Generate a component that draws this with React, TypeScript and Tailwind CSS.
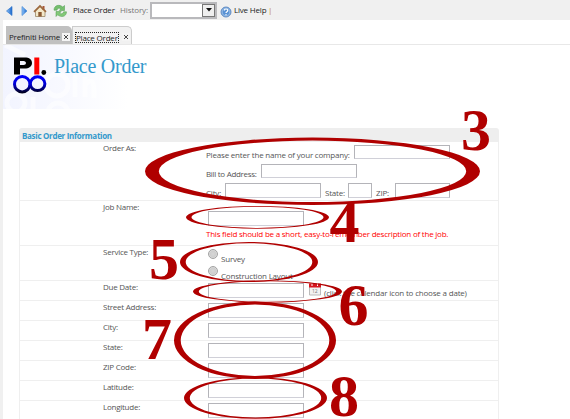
import type { ReactNode } from 'react';

const Field = ({ className }: { className: string }) => (
  <div className={`shrink-0 border border-[#b4b4b9] border-b-[#d0d0d8] bg-white ${className}`} />
);

const Row = ({ label, height, children }: { label: string; height: string; children?: ReactNode }) => (
  <div className={`flex shrink-0 border-b border-[#efefef] ${height}`}>
    <div className="w-[83px] shrink-0" />
    <div className="w-[103px] shrink-0 leading-[11px] tracking-[-0.25px]">{label}</div>
    <div className="min-w-0 flex-1">{children}</div>
  </div>
);

const InputRow = ({ label }: { label: string }) => (
  <Row label={label} height="h-5">
    <Field className="ml-0.5 mt-0.5 h-[15px] w-24" />
  </Row>
);

const Radio = () => (
  <div className="h-[10px] w-[10px] shrink-0 rounded-full border border-[#a2a2a2] bg-radial from-[#d5d5d5] from-10% via-[#cecece] to-[#f7f7f7]" />
);

const Close = () => (
  <span className="flex h-[8px] w-[8px] shrink-0 items-center justify-center bg-[#f4f4f4]">
    <svg width="6" height="6" viewBox="0 0 6 6"><path d="M1 1l4 4M5 1L1 5" stroke="#333" strokeWidth=".9" /></svg>
  </span>
);

const rings = [
  [312.5, 171.3, 167.5, 33.7, 153.7, 30.7],
  [257.5, 217.3, 71.5, 11.4, 66, 10.6],
  [249, 262, 69, 20, 63.3, 18.8],
  [267.5, 291.5, 74.5, 11, 68.7, 10.2],
  [255, 340.3, 81, 38.7, 74.3, 35.7],
  [255.5, 398, 71.5, 20.8, 65.7, 19.5],
];

const ellipse = (x: number, y: number, rx: number, ry: number) =>
  `M${x - rx} ${y}a${rx} ${ry} 0 1 0 ${rx * 2} 0a${rx} ${ry} 0 1 0 ${-rx * 2} 0Z`;

const numbers: [string, number, number][] = [
  ['3', 461, 149.5], ['4', 329.5, 242], ['5', 149, 279.3],
  ['6', 338.5, 325.2], ['7', 142, 359], ['8', 329, 416.3],
];

const Annotations = () => (
  <svg className="pointer-events-none absolute left-0 top-0" width="570" height="419" fill="#b00000">
    {rings.map(([x, y, a, b, c, d]) => (
      <path key={y} fillRule="evenodd" d={ellipse(x, y, a, b) + ellipse(x, y, c, d)} />
    ))}
    {numbers.map(([n, x, y]) => (
      <text key={n} x={x} y={y} fontSize="60" fontWeight="700" letterSpacing="0" fontFamily="'Liberation Serif', serif">{n}</text>
    ))}
  </svg>
);

const Toolbar = () => (
  <header className="flex h-5 shrink-0 items-center whitespace-nowrap bg-[#f0f0f0] text-[#222]">
    <svg className="shrink-0" width="72" height="20" viewBox="0 0 72 20">
      <defs>
        <linearGradient id="arrow"><stop stopColor="#8fc4fa" /><stop offset="1" stopColor="#1764ca" /></linearGradient>
      </defs>
      <path d="M12 6.5v9L6.5 11Z" fill="url(#arrow)" stroke="#3479cc" strokeWidth=".7" />
      <path d="M22 6.5v9l5-4.5Z" fill="url(#arrow)" stroke="#4a8cd6" strokeWidth=".7" />
      <path d="M35.500 11v5.500h9.500V11L40 6.500Z" fill="#f3e8c9" stroke="#9a8867" strokeWidth=".8" />
      <path d="M42.500 6h2v4h-2z" fill="#a85739" />
      <path d="M34 11.800L40 6l6 5.800" fill="none" stroke="#9d693e" strokeWidth="1.700" />
      <path d="M38.300 12h3.400v4.500h-3.400z" fill="#8a5932" />
      <path d="M54 10.200C54 5 59.500 4 62.800 7l1.700-1.500v5h-5.200l1.600-1.700c-1.800-1.300-3.600-.6-4 1.400Z" fill="#76bf6e" stroke="#4b984b" strokeWidth=".5" />
      <path d="M66.500 11.800c0 5-5.500 6-8.800 3L56 16.500v-5h5.200l-1.600 1.700c1.800 1.300 3.600.6 4-1.400Z" fill="#83c978" stroke="#4b984b" strokeWidth=".5" />
    </svg>
    <span className="ml-[1px] w-[47px] shrink-0">Place Order</span>
    <span className="w-[30px] shrink-0 tracking-[-0.1px] text-[#777]">History:</span>
    <div className="flex h-[17px] w-[67px] shrink-0 border-2 border-[#b9b9bc] bg-white">
      <div className="flex-1" />
      <div className="flex w-[13px] items-center justify-center border border-[#777] bg-[#eee]">
        <svg width="6" height="4" viewBox="0 0 6 4"><path d="M0 0h6L3 3.500Z" fill="#111" /></svg>
      </div>
    </div>
    <svg className="ml-[3px] mt-[3px] shrink-0" width="12" height="12" viewBox="0 0 12 12">
      <circle cx="6" cy="6" r="5" fill="#5a92d4" stroke="#6a91c4" />
      <circle cx="6" cy="6" r="3.900" fill="none" stroke="#b7d3f0" strokeWidth=".6" />
      <path d="M4.300 4.500c0-2 3.500-2 3.500 0C7.800 5.800 6 5.600 6 7" fill="none" stroke="white" strokeWidth="1.200" />
      <circle cx="6" cy="8.800" r=".7" fill="white" />
    </svg>
    <span className="ml-[2px] w-[34px] shrink-0">Live Help</span>
    <span className="text-[#c0803a]">|</span>
  </header>
);

const Logo = () => (
  <svg className="relative ml-[9px] mt-[11px] shrink-0" width="36" height="40" viewBox="0 0 36 40">
    <defs>
      <linearGradient id="blue" x1="0" y1="19" x2="0" y2="37" gradientUnits="userSpaceOnUse">
        <stop stopColor="#0000ff" /><stop offset=".5" stopColor="#0000d8" /><stop offset="1" stopColor="#000018" />
      </linearGradient>
    </defs>
    <path fillRule="evenodd" d="M2 1.500h10.500c5 0 7.500 2 7.500 5.500s-3 5.500-7.500 5.500H8v6H2ZM8 5v4h3.500c3.300 0 3.300-4 0-4Z" fill="#000" />
    <path d="M22.300 1.500h5v17h-5z" fill="#f00" />
    <circle cx="31.800" cy="16.500" r="2.400" />
    <ellipse cx="10.200" cy="28.200" rx="7.700" ry="7.700" fill="none" stroke="url(#blue)" strokeWidth="3" />
    <ellipse cx="25.600" cy="27.700" rx="7.300" ry="6.900" fill="none" stroke="url(#blue)" strokeWidth="3" />
  </svg>
);

const Watermark = () => (
  <svg className="absolute left-0 top-0" width="125" height="64" viewBox="0 0 125 64">
    <defs>
      <linearGradient id="fade"><stop stopColor="#f2f4ff" /><stop offset=".5" stopColor="#f8f9ff" /><stop offset="1" stopColor="#fff" /></linearGradient>
    </defs>
    <path d="M0 0h125v64H0z" fill="url(#fade)" />
    <g fill="none" stroke="#fff" strokeOpacity=".55" strokeWidth="5">
      <circle cx="54" cy="40" r="11" />
      <path d="M72 30v22M82 32v20M82 40q8-9 9 3v10" />
      <circle cx="13" cy="58" r="9" />
      <circle cx="55" cy="68" r="10" />
      <path d="M30 64V52M2 0l20 10" />
    </g>
  </svg>
);

export default function App() {
  return (
    <main className="relative flex h-[419px] w-[570px] flex-col overflow-hidden border-l-[3px] border-[#f0f0f0] bg-white font-['Open_Sans','Noto_Sans',sans-serif] text-[8px] tracking-[-0.19px] text-[#555]">
      <div className="-ml-[3px]"><Toolbar /></div>
      <nav className="flex h-[25px] shrink-0 items-end whitespace-nowrap border-b border-[#e8e8e8] pl-[3px] text-[#222]">
        <div className="flex h-[18px] w-[66px] items-center rounded-tr-[5px] bg-[#c0c0c0] pl-[3px] pt-[3px]">
          <span className="w-[53px] shrink-0">Prefiniti Home</span><Close />
        </div>
        <div className="flex h-[18px] w-[60px] items-center rounded-tr-[5px] border border-b-0 border-[#ccc] bg-[#f1f1f1] pl-[2px] pt-[3px]">
          <span className="w-[44px] shrink-0 border border-dotted border-[#222] leading-[9px]">Place Order</span>
          <span className="ml-[3px]"><Close /></span>
        </div>
      </nav>
      <section className="relative flex h-16 shrink-0">
        <Watermark />
        <Logo />
        <h1 className="relative ml-[6px] mt-[9px] whitespace-nowrap font-['Liberation_Serif',serif] text-[20px] leading-6 tracking-[-0.25px] text-[#3399cc]">Place Order</h1>
      </section>
      <section className="ml-4 mt-[19px] flex w-[480px] flex-1 flex-col">
        <h2 className="h-[14px] shrink-0 rounded-t-[3px] bg-[#eeeeee] pl-[3px] text-[8px] font-bold leading-[15px] tracking-[-0.3px] text-[#3399cc]">Basic Order Information</h2>
        <div className="flex min-h-0 flex-1 flex-col whitespace-nowrap border-x border-[#efefef]">
          <Row label="Order As:" height="h-[59px]">
            <div className="mt-[3px] flex h-[19px] items-start">
              <span className="w-[148px] shrink-0 pt-1 leading-[12px]">Please enter the name of your company:</span><Field className="h-[14px] w-24" />
            </div>
            <div className="flex h-[19px] items-start">
              <span className="w-[55px] shrink-0 pt-1 leading-[12px] tracking-[-0.3px]">Bill to Address:</span><Field className="h-[14px] w-24" />
            </div>
            <div className="flex h-[17px] items-start">
              <span className="w-[19px] shrink-0 pt-1 leading-[12px]">City:</span><Field className="h-[15px] w-24" />
              <span className="ml-1 w-[23px] shrink-0 pt-1 leading-[12px]">State:</span><Field className="h-[15px] w-6" />
              <span className="ml-1 w-[19px] shrink-0 pt-1 leading-[12px]">ZIP:</span><Field className="h-[15px] w-[55px]" />
            </div>
          </Row>
          <Row label="Job Name:" height="h-[45px]">
            <Field className="ml-0.5 mt-[10px] h-[15px] w-24" />
            <div className="mt-[2px] leading-[11px] tracking-[-0.22px] text-[#ff0000]">This field should be a short, easy-to-remember description of the job.</div>
          </Row>
          <Row label="Service Type:" height="h-[35px]">
            <div className="ml-0.5 mt-[3px] flex h-[17px]"><Radio /><span className="ml-[3px] pt-[4px] leading-[11px]">Survey</span></div>
            <div className="ml-0.5 flex"><Radio /><span className="ml-[3px] pt-[4px] leading-[11px]">Construction Layout</span></div>
          </Row>
          <Row label="Due Date:" height="h-5">
            <div className="ml-0.5 mt-0.5 flex">
              <Field className="h-[15px] w-24" />
              <svg className="ml-[5px] shrink-0" width="12" height="13" viewBox="0 0 12 13">
                <path d="M.5 1.500h11v10.500H.5Z" fill="#f2f2f2" stroke="#bbb" />
                <path d="M0 .5h12v4H0Z" fill="#d61620" />
                <path d="M3 0v3M8.500 0v3" stroke="#fff" />
                <text x="3" y="10" fontSize="5" fill="#777" fontFamily="'Open Sans', sans-serif">12</text>
              </svg>
              <span className="ml-[3px] pt-[4px] leading-[11px]">(click the calendar icon to choose a date)</span>
            </div>
          </Row>
          <InputRow label="Street Address:" />
          <InputRow label="City:" />
          <InputRow label="State:" />
          <InputRow label="ZIP Code:" />
          <InputRow label="Latitude:" />
          <InputRow label="Longitude:" />
        </div>
      </section>
      <div className="pointer-events-none absolute -left-[3px] top-0"><Annotations /></div>
    </main>
  );
}
